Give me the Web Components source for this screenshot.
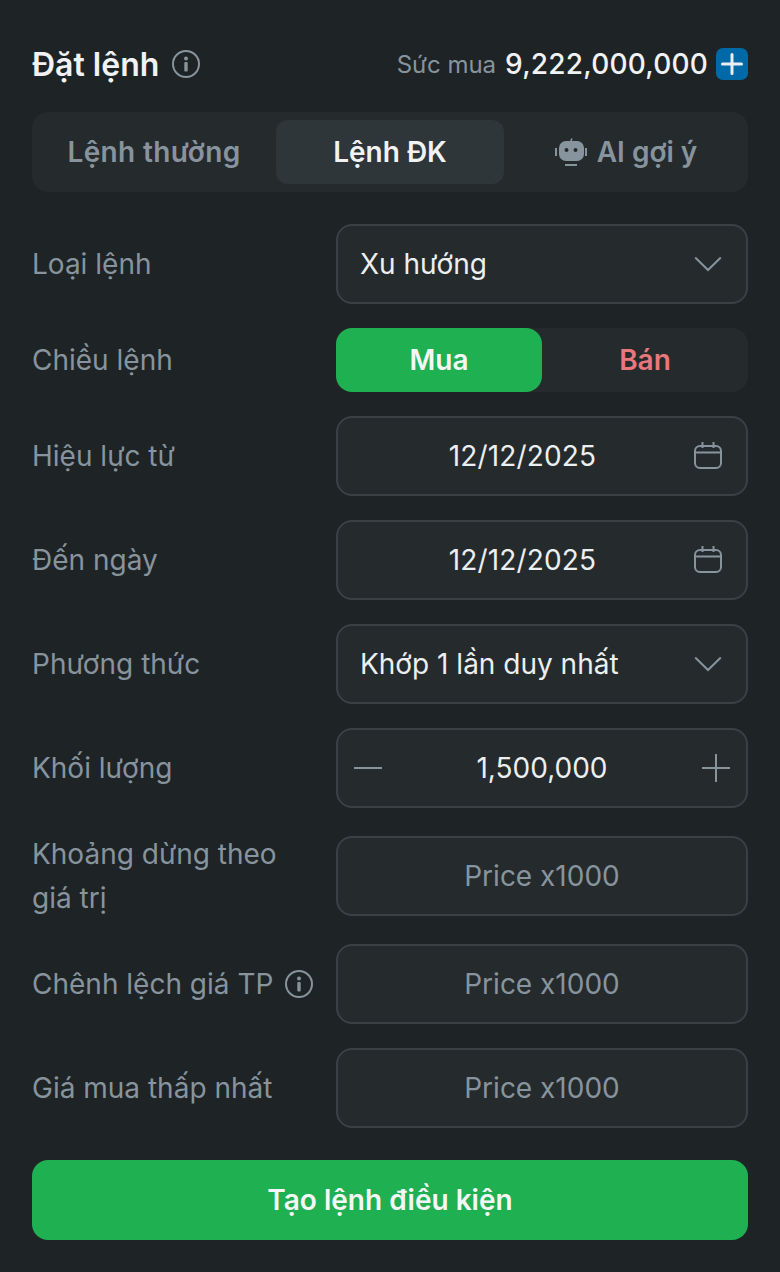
<!DOCTYPE html>
<html lang="vi">
<head>
<meta charset="utf-8">
<style>
  html, body { margin: 0; background: #1e2326; }
  body { font-family: Inter, "Noto Sans", sans-serif; }
</style>
</head>
<body>
<order-form></order-form>
<script>
'use strict';

const ICONS = {
  info: `<svg viewBox="0 0 28 28" width="28" height="28" fill="none"><circle cx="14" cy="14" r="13" stroke="#87949d" stroke-width="2"/><circle cx="14" cy="8.6" r="2" fill="#87949d"/><rect x="12.3" y="12" width="3.4" height="9.5" rx="1" fill="#87949d"/></svg>`,
  chevron: `<svg viewBox="0 0 28 16" width="28" height="16" fill="none"><path d="M1.2 1.5 14 14 26.8 1.5" stroke="#87949d" stroke-width="2"/></svg>`,
  calendar: `<svg viewBox="0 0 28 28" width="28" height="28" fill="none" stroke="#87949d" stroke-width="2"><rect x="1" y="4" width="26" height="22" rx="5"/><path d="M1 10.5h26M8.5 0v6M19.5 0v6"/></svg>`,
  minus: `<svg viewBox="0 0 28 28" width="28" height="28" fill="none"><path d="M0 14h28" stroke="#87949d" stroke-width="2"/></svg>`,
  plus: `<svg viewBox="0 0 28 28" width="28" height="28" fill="none"><path d="M0 14h28M14 0v28" stroke="#87949d" stroke-width="2"/></svg>`,
  bot: `<svg viewBox="0 0 32 28" width="32" height="28" fill="none"><path d="M15.5 4 17 0.5" stroke="#87949d" stroke-width="1.6"/><rect x="4" y="3" width="25" height="20" rx="7" fill="#87949d"/><circle cx="11.5" cy="12" r="2" fill="#25292d"/><circle cx="20.5" cy="12" r="2" fill="#25292d"/><path d="M1 10v8M31 10v8" stroke="#87949d" stroke-width="2"/><path d="M10 27h12" stroke="#87949d" stroke-width="2"/></svg>`
};

class OrderHeader extends HTMLElement {
  constructor() {
    super();
    this.attachShadow({ mode: "open" });
    this.shadowRoot.innerHTML = `
      <style>
        :host { display: flex; align-items: center; justify-content: space-between; height: 40px; }
        .title { display: flex; align-items: center; gap: 13px; font-size: 32px; font-weight: 600; color: #f0f2f3; }
        svg { display: block; }
        .power { display: flex; align-items: center; }
        .lbl { font-size: 24px; color: #87949d; margin-right: 9px; }
        .val { font-size: 28px; font-weight: 500; color: #f0f2f3; margin-right: 8px; letter-spacing: 0.2px; }
        .add { width: 32px; height: 32px; border-radius: 7px; background: #0069a8; display: flex; align-items: center; justify-content: center; }
      </style>
      <div class="title"><span>Đặt lệnh</span>${ICONS.info}</div>
      <div class="power">
        <span class="lbl">Sức mua</span><span class="val">9,222,000,000</span>
        <span class="add"><svg viewBox="0 0 24 24" width="24" height="24" fill="none"><path d="M2.5 12h19M12 2.5v19" stroke="#e8eef1" stroke-width="3" stroke-linecap="round"/></svg></span>
      </div>`;
  }
}
customElements.define("order-header", OrderHeader);

class OrderTabs extends HTMLElement {
  constructor() {
    super();
    this.attachShadow({ mode: "open" });
    this.shadowRoot.innerHTML = `
      <style>
        :host { display: grid; grid-template-columns: repeat(3, 1fr); gap: 8px; padding: 8px; margin: 28px 0 32px; height: 64px; background: #252a2d; border-radius: 16px; font-size: 28px; font-weight: 600; color: #87949d; }
        div { display: flex; align-items: center; justify-content: center; gap: 10px; border-radius: 12px; }
        .wide { letter-spacing: 0.35px; }
        .on { background: #2f3639; color: #f0f2f3; }
        svg { display: block; }
      </style>
      <div class="wide">Lệnh thường</div>
      <div class="on">Lệnh ĐK</div>
      <div>${ICONS.bot}<span>AI gợi ý</span></div>`;
  }
}
customElements.define("order-tabs", OrderTabs);

class FormRow extends HTMLElement {
  constructor() {
    super();
    this.attachShadow({ mode: "open" });
    this.shadowRoot.innerHTML = `
      <style>
        :host { display: grid; grid-template-columns: 304px 412px; align-items: center; font-size: 28px; line-height: 44px; color: #87949d; }
        .label { display: flex; align-items: center; gap: 12px; }
        svg { display: block; }
      </style>
      <div class="label"><span><slot name="label"></slot></span><slot name="hint"></slot></div>
      <slot></slot>`;
  }
}
customElements.define("form-row", FormRow);

class FieldBox extends HTMLElement {
  constructor() {
    super();
    this.attachShadow({ mode: "open" });
  }
  connectedCallback() {
    let icon = this.getAttribute("icon");
    let lead = this.getAttribute("lead");
    this.shadowRoot.innerHTML = `
      <style>
        :host { display: flex; align-items: center; box-sizing: border-box; height: 80px; padding: 0 24px 0 22px; background: #252a2d; border: 2px solid #3a4044; border-radius: 16px; font-size: 28px; color: #eceff0; }
        :host([align="start"]) .text { text-align: left; }
        :host([muted]) { color: #87949d; padding: 0 22px; }
        :host([lead]) { padding: 0 16px; }
        :host([icon="calendar"]) { padding-left: 13px; letter-spacing: 0.15px; }
        .text { flex: 1; text-align: center; }
        svg { display: block; }
      </style>
      ${lead ? ICONS[lead] : ""}
      <span class="text"><slot></slot></span>
      ${icon ? ICONS[icon] : ""}`;
  }
}
customElements.define("field-box", FieldBox);

class SideToggle extends HTMLElement {
  constructor() {
    super();
    this.attachShadow({ mode: "open" });
    this.shadowRoot.innerHTML = `
      <style>
        :host { display: grid; grid-template-columns: 1fr 1fr; height: 64px; background: #252a2d; border-radius: 16px; font-size: 28px; font-weight: 600; }
        div { display: flex; align-items: center; justify-content: center; border-radius: 16px; }
        .buy { background: #1fb052; color: #f5f7f7; }
        .sell { color: #ea777b; }
      </style>
      <div class="buy">Mua</div><div class="sell">Bán</div>`;
  }
}
customElements.define("side-toggle", SideToggle);

class SubmitButton extends HTMLElement {
  constructor() {
    super();
    this.attachShadow({ mode: "open" });
    this.shadowRoot.innerHTML = `
      <style>
        :host { display: flex; align-items: center; justify-content: center; height: 80px; margin-top: 32px; background: #1fb052; border-radius: 16px; font-size: 28px; font-weight: 600; color: #f5f7f7; }
      </style>
      <slot></slot>`;
  }
}
customElements.define("submit-button", SubmitButton);

class OrderForm extends HTMLElement {
  constructor() {
    super();
    this.attachShadow({ mode: "open" });
    this.shadowRoot.innerHTML = `
      <style>
        :host { display: block; box-sizing: border-box; width: 780px; height: 1272px; padding: 44px 32px 32px; background: #1e2326; }
        .rows { display: flex; flex-direction: column; gap: 24px; }
        svg { display: block; }
      </style>
      <order-header></order-header>
      <order-tabs></order-tabs>
      <div class="rows">
        <form-row><span slot="label">Loại lệnh</span><field-box align="start" icon="chevron">Xu hướng</field-box></form-row>
        <form-row><span slot="label">Chiều lệnh</span><side-toggle></side-toggle></form-row>
        <form-row><span slot="label">Hiệu lực từ</span><field-box icon="calendar">12/12/2025</field-box></form-row>
        <form-row><span slot="label">Đến ngày</span><field-box icon="calendar">12/12/2025</field-box></form-row>
        <form-row><span slot="label">Phương thức</span><field-box align="start" icon="chevron">Khớp 1 lần duy nhất</field-box></form-row>
        <form-row><span slot="label">Khối lượng</span><field-box lead="minus" icon="plus">1,500,000</field-box></form-row>
        <form-row><span slot="label">Khoảng dừng theo<br>giá trị</span><field-box muted>Price x1000</field-box></form-row>
        <form-row><span slot="label">Chênh lệch giá TP</span><span slot="hint">${ICONS.info}</span><field-box muted>Price x1000</field-box></form-row>
        <form-row><span slot="label">Giá mua thấp nhất</span><field-box muted>Price x1000</field-box></form-row>
      </div>
      <submit-button>Tạo lệnh điều kiện</submit-button>`;
  }
}
customElements.define("order-form", OrderForm);
</script>
</body>
</html>
